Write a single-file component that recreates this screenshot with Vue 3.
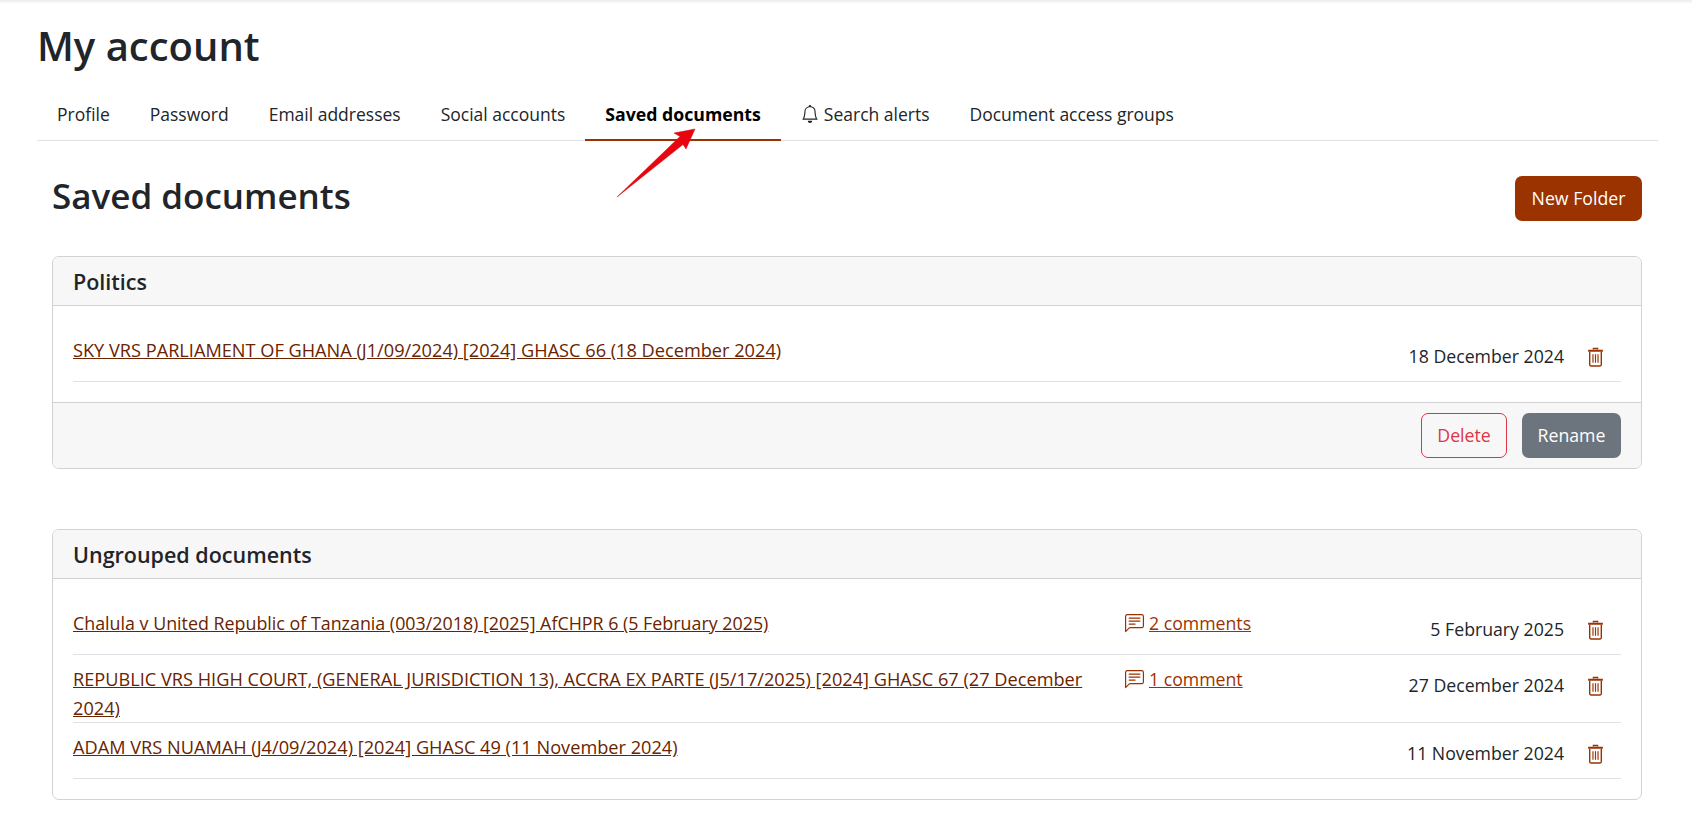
<script setup>
const tabs = [
  { label: 'Profile' },
  { label: 'Password' },
  { label: 'Email addresses' },
  { label: 'Social accounts' },
  { label: 'Saved documents', active: true },
  { label: 'Search alerts', bell: true },
  { label: 'Document access groups' },
]
const folders = [
  {
    name: 'Politics',
    footer: true,
    docs: [
      { title: 'SKY VRS PARLIAMENT OF GHANA (J1/09/2024) [2024] GHASC 66 (18 December 2024)', date: '18 December 2024' },
    ],
  },
  {
    name: 'Ungrouped documents',
    docs: [
      { title: 'Chalula v United Republic of Tanzania (003/2018) [2025] AfCHPR 6 (5 February 2025)', comments: '2 comments', date: '5 February 2025', mixed: true },
      { title: 'REPUBLIC VRS HIGH COURT, (GENERAL JURISDICTION 13), ACCRA EX PARTE (J5/17/2025) [2024] GHASC 67 (27 December 2024)', comments: '1 comment', date: '27 December 2024' },
      { title: 'ADAM VRS NUAMAH (J4/09/2024) [2024] GHASC 49 (11 November 2024)', date: '11 November 2024' },
    ],
  },
]
</script>

<template>
  <div class="page">
    <div class="shadow"></div>
    <h1 class="account">My account</h1>
    <nav class="tabs">
      <a v-for="t in tabs" :key="t.label" class="tab" :class="{ active: t.active }">
        <svg v-if="t.bell" class="bell" viewBox="0 0 16 16" fill="currentColor"><path d="M8 16a2 2 0 0 0 2-2H6a2 2 0 0 0 2 2M8 1.918l-.797.161A4 4 0 0 0 4 6c0 .628-.134 2.197-.459 3.742-.16.767-.376 1.566-.663 2.258h10.244c-.287-.692-.502-1.49-.663-2.258C12.134 8.197 12 6.628 12 6a4 4 0 0 0-3.203-3.92zM14.22 12c.223.447.481.801.78 1H1c.299-.199.557-.553.78-1C2.68 10.2 3 6.88 3 6c0-2.42 1.72-4.44 4.005-4.901a1 1 0 1 1 1.99 0A5 5 0 0 1 13 6c0 .88.32 4.2 1.22 6"/></svg>
        {{ t.label }}
      </a>
    </nav>
    <svg class="arrow" viewBox="0 0 84 72"><path d="M3 69 L66 8.5 L60 5 L81 1 L72 21 L69 16.5 Z" fill="#e8050f" stroke="#d01018" stroke-width="0.5" stroke-linejoin="round"/></svg>
    <main class="content">
      <div class="head">
        <h2 class="saved">Saved documents</h2>
        <button class="btn primary">New Folder</button>
      </div>
      <section v-for="f in folders" :key="f.name" class="card">
        <header class="card-head">{{ f.name }}</header>
        <div class="card-body">
          <div v-for="d in f.docs" :key="d.title" class="row">
            <a class="title" :class="{ mixed: d.mixed }">{{ d.title }}</a>
            <div class="comments">
              <template v-if="d.comments">
                <svg class="chat" viewBox="0 0 16 16" fill="currentColor"><path d="M14 1a1 1 0 0 1 1 1v8a1 1 0 0 1-1 1H4.414A2 2 0 0 0 3 11.586l-2 2V2a1 1 0 0 1 1-1zM2 0a2 2 0 0 0-2 2v12.793a.5.5 0 0 0 .854.353l2.853-2.853A1 1 0 0 1 4.414 12H14a2 2 0 0 0 2-2V2a2 2 0 0 0-2-2z"/><path d="M3 3.5a.5.5 0 0 1 .5-.5h9a.5.5 0 0 1 0 1h-9a.5.5 0 0 1-.5-.5M3 6a.5.5 0 0 1 .5-.5h9a.5.5 0 0 1 0 1h-9A.5.5 0 0 1 3 6m0 2.5a.5.5 0 0 1 .5-.5h5a.5.5 0 0 1 0 1h-5a.5.5 0 0 1-.5-.5"/></svg>
                <a class="count">{{ d.comments }}</a>
              </template>
            </div>
            <div class="date">{{ d.date }}</div>
            <svg class="trash" viewBox="0 0 16 19" fill="none" stroke="currentColor" stroke-width="1.3"><path d="M1 3.6h14" stroke-width="2"/><path d="M6 2.4V1.4h4v1"/><path d="M2.5 4.6v12.2a1.2 1.2 0 0 0 1.2 1.2h8.6a1.2 1.2 0 0 0 1.2-1.2V4.6"/><path d="M5.6 7v8M8 7v8M10.4 7v8" stroke-width="1.1"/></svg>
          </div>
        </div>
        <footer v-if="f.footer" class="card-foot">
          <button class="btn danger">Delete</button>
          <button class="btn grey">Rename</button>
        </footer>
      </section>
    </main>
  </div>
</template>

<style>
html, body { margin: 0; background: #fff; overflow: hidden; }
</style>

<style scoped>
.page {
  position: relative;
  height: 821px;
  box-sizing: border-box;
  padding: 0 34px 0 37px;
  font-family: "Open Sans", sans-serif;
  font-size: 17.7px;
  color: #212529;
  overflow: hidden;
}
.shadow {
  position: absolute;
  left: 0; right: 0; top: 0;
  height: 4px;
  background: linear-gradient(#ececec, #fff);
}
.account {
  margin: 0;
  padding-top: 20px;
  font-size: 40px;
  line-height: 52px;
  font-weight: 600;
  height: 52px;
}
.tabs {
  display: flex;
  margin-top: 15px;
  border-bottom: 1px solid #dee2e6;
  height: 53px;
}
.tab {
  display: flex;
  align-items: center;
  gap: 4px;
  padding: 2px 20px 0;
  border-bottom: 2px solid transparent;
  box-sizing: border-box;
  height: 54px;
  font-size: 17.5px;
  white-space: nowrap;
}
.tab.active { font-size: 17.7px; font-weight: 700; color: #000; border-bottom-color: #9b3300; }
.bell { width: 18px; height: 18px; margin-right: 1px; }
.arrow {
  position: absolute;
  left: 614px;
  top: 128px;
  width: 84px;
  height: 72px;
}
.content { padding: 0 16px 0 15px; }
.head {
  display: flex;
  justify-content: space-between;
  align-items: flex-start;
  padding-top: 33px;
  height: 82px;
}
.saved {
  margin: 1px 0 0;
  font-size: 35px;
  line-height: 42px;
  font-weight: 600;
}
.btn {
  font: inherit;
  height: 45px;
  padding: 0 0 2px;
  border-radius: 7px;
  border: 1px solid transparent;
  box-sizing: border-box;
}
.primary { background: #9b3300; color: #fff; width: 127px; margin-top: 2px; }
.danger { background: transparent; border-color: #dc3545; color: #dc3545; width: 86px; }
.grey { background: #6c757d; color: #fff; width: 99px; }
.card {
  border: 1px solid #d2d2d2;
  border-radius: 7px;
  margin-bottom: 60px;
  overflow: hidden;
}
.card-head {
  height: 48px;
  line-height: 50px;
  padding: 0 20px;
  background: #f7f7f7;
  border-bottom: 1px solid #d2d2d2;
  font-size: 21.5px;
  font-weight: 600;
}
.card-body { padding: 20px 20px 20px; }
.row {
  display: grid;
  grid-template-columns: 1052px 1fr auto 57px;
  min-height: 55px;
  border-bottom: 1px solid #dee2e6;
}
.title {
  padding: 10px 20px 0 0;
  margin-bottom: -1px;
  font-size: 18.18px;
  line-height: 29px;
  color: #6a2300;
  text-decoration: underline;
}
.title.mixed { font-size: 17.85px; }
.comments {
  display: flex;
  align-items: flex-start;
  padding-top: 10px;
  line-height: 29px;
  color: #9b3300;
}
.chat { width: 19px; height: 19px; margin: 5px 5px 0 0; }
.count { text-decoration: underline; }
.date { padding-top: 16px; line-height: 29px; text-align: right; }
.trash { width: 17px; height: 20px; margin: 21px 0 0 23px; color: #9b3300; }
.card-foot {
  display: flex;
  justify-content: flex-end;
  gap: 15px;
  height: 66px;
  box-sizing: border-box;
  padding: 10px 20px;
  background: #f7f7f7;
  border-top: 1px solid #d2d2d2;
}
</style>
